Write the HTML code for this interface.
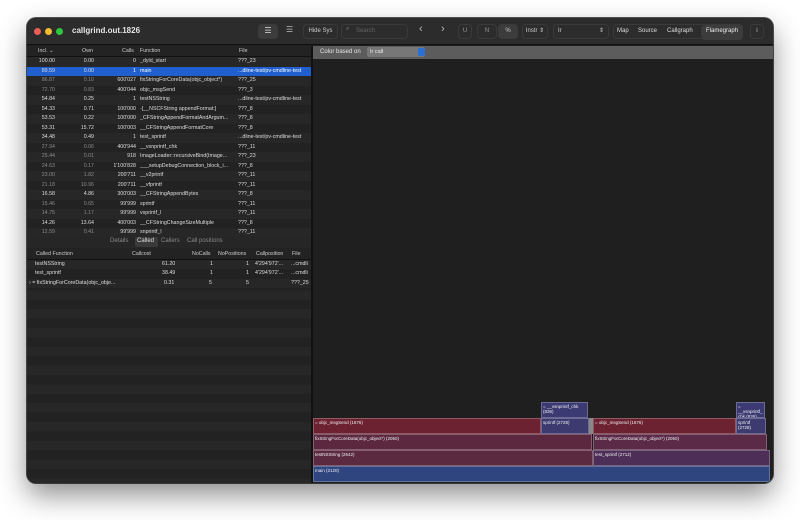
<!DOCTYPE html>
<html><head><style>
*{margin:0;padding:0;box-sizing:border-box}
body{width:800px;height:520px;background:#fff;font-family:"Liberation Sans",sans-serif;position:relative;overflow:hidden}
.win{position:absolute;left:27px;top:18px;width:746px;height:465px;background:#1f1f1f;border-radius:9px;overflow:hidden;box-shadow:0 12px 28px rgba(0,0,0,.45),0 0 0 1px #555}
.tb{position:absolute;left:0;top:0;width:746px;height:27px;background:#2c2c2c;border-bottom:1px solid #111}
.dot{position:absolute;top:10px;width:7px;height:7px;border-radius:50%}
.t{position:absolute;color:#ddd;font-size:6px;white-space:nowrap}
.btn{position:absolute;top:6px;height:15px;border-radius:4px;border:1px solid #3a3a3a;color:#ccc;font-size:6px;line-height:13px;text-align:center}
.row{position:absolute;left:0;width:284px;height:9.5px;font-size:5.3px;color:#ddd;line-height:9.5px}
.row span{position:absolute;white-space:nowrap;overflow:hidden}
.fb{position:absolute;font-size:4.5px;color:#eee;padding:1px;border:1px solid rgba(255,255,255,.25);line-height:5px;overflow:hidden}
</style></head><body>
<div class="win">
<div class="tb">
<div class="dot" style="left:7px;background:#ee5d55"></div>
<div class="dot" style="left:18px;background:#f5bc2f"></div>
<div class="dot" style="left:29px;background:#2dc840"></div>
<div class="t" style="left:45px;top:8px;font-size:8px;font-weight:bold;color:#e5e5e5">callgrind.out.1826</div>
<div class="btn" style="left:231px;width:20px;background:#3c3c3c;color:#ddd;font-size:8px;line-height:12px">☰</div>
<div class="t" style="left:259px;top:7px;font-size:8px;color:#bbb">☰</div>
<div class="btn" style="left:276px;width:35px">Hide Sys</div>
<div class="btn" style="left:314px;width:67px;text-align:left;padding-left:14px;color:#666">Search</div>
<div class="t" style="left:319px;top:8px;color:#888">⌕</div>
<div class="t" style="left:392px;top:5px;font-size:11px;color:#bbb">‹</div>
<div class="t" style="left:414px;top:5px;font-size:11px;color:#bbb">›</div>
<div class="btn" style="left:431px;width:14px;color:#999">U</div>
<div class="btn" style="left:450px;width:20px;color:#999">N</div>
<div class="btn" style="left:471px;width:20px;background:#3c3c3c">%</div>
<div class="btn" style="left:495px;width:26px">Instr ⇕</div>
<div class="btn" style="left:526px;width:56px;text-align:left;padding-left:4px">Ir<span style="float:right;padding-right:4px">⇕</span></div>
<div class="btn" style="left:586px;width:130px"></div>
<div class="t" style="left:590px;top:10px">Map</div>
<div class="t" style="left:611px;top:10px">Source</div>
<div class="t" style="left:640px;top:10px">Callgraph</div>
<div class="btn" style="left:674px;width:42px;background:#3c3c3c;border:none;top:7px;color:#eee">Flamegraph</div>
<div class="btn" style="left:723px;width:14px">ⅰ</div>
</div>
<div style="position:absolute;left:0;top:28px;width:285px;height:437px;background:repeating-linear-gradient(#272727 0 9.4px,#222 9.4px 18.8px)"></div>
<div class="row" style="top:28px;height:11px;background:#232323;border-bottom:1px solid #111;color:#ccc;line-height:11px">
<span style="left:11px">Incl. ⌄</span><span style="left:55px">Own</span><span style="left:95px">Calls</span><span style="left:113px">Function</span><span style="left:212px">File</span></div>
<div id="rows"></div>
<div style="position:absolute;left:0;top:218px;width:285px;height:12px;background:#262626"></div>
<div class="t" style="left:83px;top:220px;color:#888">Details</div>
<div style="position:absolute;left:108px;top:219px;width:23px;height:10px;background:#3a3a3a;border-radius:2px"></div>
<div class="t" style="left:110px;top:220px;color:#ddd">Called</div>
<div class="t" style="left:134px;top:220px;color:#888">Callers</div>
<div class="t" style="left:160px;top:220px;color:#888">Call positions</div>
<div class="row" style="top:231px;height:11px;background:#232323;border-bottom:1px solid #111;line-height:11px;color:#ccc">
<span style="left:9px">Called Function</span><span style="left:105px">Callcost</span><span style="left:165px">NoCalls</span><span style="left:191px">NoPositions</span><span style="left:229px">Callposition</span><span style="left:265px">File</span></div>
<div class="row" style="top:242px;background:#272727"><span style="left:8px">testNSString</span><span style="left:135px">61.20</span><span style="left:183px">1</span><span style="left:219px">1</span><span style="left:228px">4'294'972'...</span><span style="left:264px">...cmdli</span></div>
<div class="row" style="top:251.4px;background:#222"><span style="left:8px">test_sprintf</span><span style="left:135px">38.49</span><span style="left:183px">1</span><span style="left:219px">1</span><span style="left:228px">4'294'972'...</span><span style="left:264px">...cmdli</span></div>
<div class="row" style="top:260.8px;background:#272727"><span style="left:2px">›  = fixStringForCoreData(objc_obje...</span><span style="left:137px">0.31</span><span style="left:182px">5</span><span style="left:219px">5</span><span style="left:264px">???_25</span></div>
<div style="position:absolute;left:284px;top:28px;width:2px;height:437px;background:#111"></div>
<div style="position:absolute;left:286px;top:28px;width:460px;height:13px;background:#5c5c5c"></div>
<div class="t" style="left:293px;top:31px;font-size:6px;color:#e5e5e5">Color based on</div>
<div style="position:absolute;left:340px;top:29px;width:58px;height:10px;background:#777;border-radius:2px;font-size:5.5px;color:#eee;line-height:10px;padding-left:3px">Ir call<span style="position:absolute;right:0;top:1px;width:7px;height:8px;background:#2a6fd6;border-radius:2px"></span></div>
<div class="fb" style="left:286px;top:448px;width:457px;height:16px;background:#2e4580">main (2120)</div>
<div class="fb" style="left:286px;top:432px;width:280px;height:16px;background:#5c2a40">testNSString (2642)</div>
<div class="fb" style="left:566px;top:432px;width:177px;height:16px;background:#4d2e57">test_sprintf (2712)</div>
<div class="fb" style="left:286px;top:416px;width:279px;height:16px;background:#5b283f">fixStringForCoreData(objc_object*) (2050)</div>
<div class="fb" style="left:566px;top:416px;width:174px;height:16px;background:#5a2a46">fixStringForCoreData(objc_object*) (2050)</div>
<div class="fb" style="left:286px;top:400px;width:228px;height:16px;background:#6c2230">= objc_msgSend (1676)</div>
<div class="fb" style="left:514px;top:400px;width:48px;height:16px;background:#3d3a70">sprintf (2728)</div>
<div style="position:absolute;left:562px;top:400px;width:4px;height:16px;background:#888"></div>
<div class="fb" style="left:566px;top:400px;width:143px;height:16px;background:#6c2230">= objc_msgSend (1676)</div>
<div class="fb" style="left:709px;top:400px;width:30px;height:16px;background:#3d3a70">sprintf (2728)</div>
<div class="fb" style="left:514px;top:384px;width:47px;height:16px;background:#3c3a72">= __vsnprintf_chk (836)</div>
<div class="fb" style="left:709px;top:384px;width:29px;height:16px;background:#3c3a72">= __vsnprintf_ chk (836)</div>
</div>
<script>
var d=[["100.00","0.00","0","_dyld_start","???_23",0],["89.59","0.00","1","main","...dline-test/pv-cmdline-test",2],["86.87","0.10","600'027","fixStringForCoreData(objc_object*)","???_25",1],["72.70","0.83","400'044","objc_msgSend","???_3",1],["54.84","0.25","1","testNSString","...dline-test/pv-cmdline-test",0],["54.33","0.71","100'000","-[__NSCFString appendFormat:]","???_8",0],["53.53","0.22","100'000","_CFStringAppendFormatAndArgum...","???_8",0],["53.31","15.72","100'003","__CFStringAppendFormatCore","???_8",0],["34.48","0.49","1","test_sprintf","...dline-test/pv-cmdline-test",0],["27.94","0.06","400'944","__vsnprintf_chk","???_11",1],["25.44","0.01","918","ImageLoader::recursiveBind(Image...","???_23",1],["24.63","0.17","1'100'828","___setupDebugConnection_block_i...","???_8",1],["23.00","1.82","200'711","__v2printf","???_11",1],["21.18","10.96","200'711","__vfprintf","???_11",1],["16.58","4.86","300'003","__CFStringAppendBytes","???_8",0],["15.46","0.65","99'999","sprintf","???_11",1],["14.75","1.17","99'999","vsprintf_l","???_11",1],["14.26","13.64","400'003","__CFStringChangeSizeMultiple","???_8",0],["12.59","0.41","99'999","snprintf_l","???_11",1]];
var h="";d.forEach(function(r,i){var bg=r[5]==2?"#1f5fd0":(i%2?"#222":"#272727");var c=r[5]==1?"#8a8a8a":"#ddd";var fc=r[5]==2?"#fff":"#ddd";
h+='<div class="row" style="top:'+(39+i*9.5)+'px;background:'+bg+';color:'+c+'"><span style="right:256px">'+r[0]+'</span><span style="right:217px">'+r[1]+'</span><span style="right:175px;color:'+fc+'">'+r[2]+'</span><span style="left:113px;width:96px;color:'+fc+'">'+r[3]+'</span><span style="left:211px;width:73px;color:'+fc+'">'+r[4]+'</span></div>';});
document.getElementById("rows").outerHTML=h;
</script>
</body></html>
